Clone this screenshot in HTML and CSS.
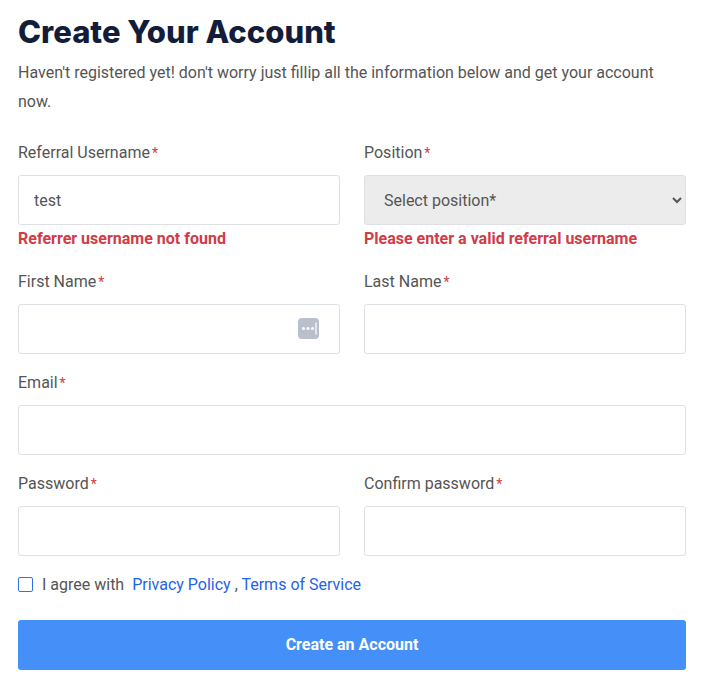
FILE: index.html
```html
<!DOCTYPE html>
<html lang="en">
<head>
    <meta charset="UTF-8">
    <meta name="viewport" content="width=device-width, initial-scale=1.0">
    <title>Create Your Account</title>
    <link rel="stylesheet" href="styles.css">
</head>
<body>
    <form class="signup">
        <h1>Create Your Account</h1>
        <p class="intro">Haven't registered yet! don't worry just fillip all the information below and get your account now.</p>

        <div class="row first">
            <div class="field">
                <label for="referral">Referral Username<span class="req">*</span></label>
                <input type="text" id="referral" value="test">
                <div class="error">Referrer username not found</div>
            </div>
            <div class="field">
                <label for="position">Position<span class="req">*</span></label>
                <select id="position">
                    <option>Select position*</option>
                </select>
                <div class="error">Please enter a valid referral username</div>
            </div>
        </div>

        <div class="row">
            <div class="field">
                <label for="firstName">First Name<span class="req">*</span></label>
                <div class="input-wrap">
                    <input type="text" id="firstName">
                    <!-- password manager key icon -->
                    <svg class="autofill" width="21" height="21" viewBox="0 0 21 21">
                        <rect width="21" height="21" rx="4" fill="#b9bfcb"/>
                        <circle cx="5.5" cy="10.5" r="1.5" fill="#fff"/>
                        <circle cx="10" cy="10.5" r="1.5" fill="#fff"/>
                        <circle cx="14.5" cy="10.5" r="1.5" fill="#fff"/>
                        <rect x="17.4" y="4.5" width="1.2" height="12" fill="#fff"/>
                    </svg>
                </div>
            </div>
            <div class="field">
                <label for="lastName">Last Name<span class="req">*</span></label>
                <input type="text" id="lastName">
            </div>
        </div>

        <div class="row single">
            <div class="field">
                <label for="email">Email<span class="req">*</span></label>
                <input type="text" id="email">
            </div>
        </div>

        <div class="row">
            <div class="field">
                <label for="password">Password<span class="req">*</span></label>
                <input type="password" id="password">
            </div>
            <div class="field">
                <label for="confirm">Confirm password<span class="req">*</span></label>
                <input type="password" id="confirm">
            </div>
        </div>

        <div class="agree">
            <span class="check"></span>
            <span>I agree with <a href="#" class="policy">Privacy Policy</a> , <a href="#">Terms of Service</a></span>
        </div>

        <button type="button">Create an Account</button>
    </form>
</body>
</html>
```

FILE: styles.css
```css
body {
    margin: 0;
    font-family: Roboto, "Liberation Sans", sans-serif;
    font-size: 16px;
    color: #555;
    background-color: #fff;
}
.signup {
    padding: 14px 24px 0 18px;
}
h1 {
    margin: 0;
    font-family: Inter, "Liberation Sans", sans-serif;
    font-size: 31px;
    line-height: 36px;
    font-weight: 800;
    color: #131c38;
}
.intro {
    margin: 8px 0 0;
    line-height: 29px;
}
.row {
    display: grid;
    grid-template-columns: 1fr 1fr;
    column-gap: 24px;
    margin-top: 17px;
}
.row.first {
    margin-top: 25px;
}
.row.single {
    grid-template-columns: 1fr;
}
label {
    display: block;
    line-height: 24px;
    margin-bottom: 10px;
}
.req {
    color: #d13c47;
    font-size: 14px;
    margin-left: 2px;
}
input, select {
    display: block;
    box-sizing: border-box;
    width: 100%;
    height: 50px;
    border: 1px solid #dfe0e6;
    border-radius: 3px;
    font-family: inherit;
    font-size: 16px;
    color: #555;
    background-color: #fff;
}
input {
    padding: 0 15px;
}
select {
    padding: 0 15px;
    background-color: #ececec;
}
.input-wrap {
    position: relative;
}
.autofill {
    position: absolute;
    top: 14px;
    right: 21px;
}
.error {
    margin: 2px 0;
    line-height: 24px;
    font-weight: 700;
    color: #d13c47;
}
.agree {
    display: flex;
    align-items: center;
    gap: 9px;
    margin-top: 17px;
    line-height: 24px;
}
.check {
    box-sizing: border-box;
    width: 15px;
    height: 15px;
    margin-bottom: 2px;
    border: 1px solid #2e73e8;
    border-radius: 2px;
}
a {
    color: #2563eb;
    text-decoration: none;
}
.policy {
    margin-left: 4px;
}
button {
    display: block;
    width: 100%;
    height: 50px;
    margin-top: 23px;
    padding: 0 0 2px;
    border: none;
    border-radius: 3px;
    background-color: #458ff8;
    color: #fff;
    font-family: inherit;
    font-size: 16px;
    font-weight: 700;
    cursor: pointer;
}
```
